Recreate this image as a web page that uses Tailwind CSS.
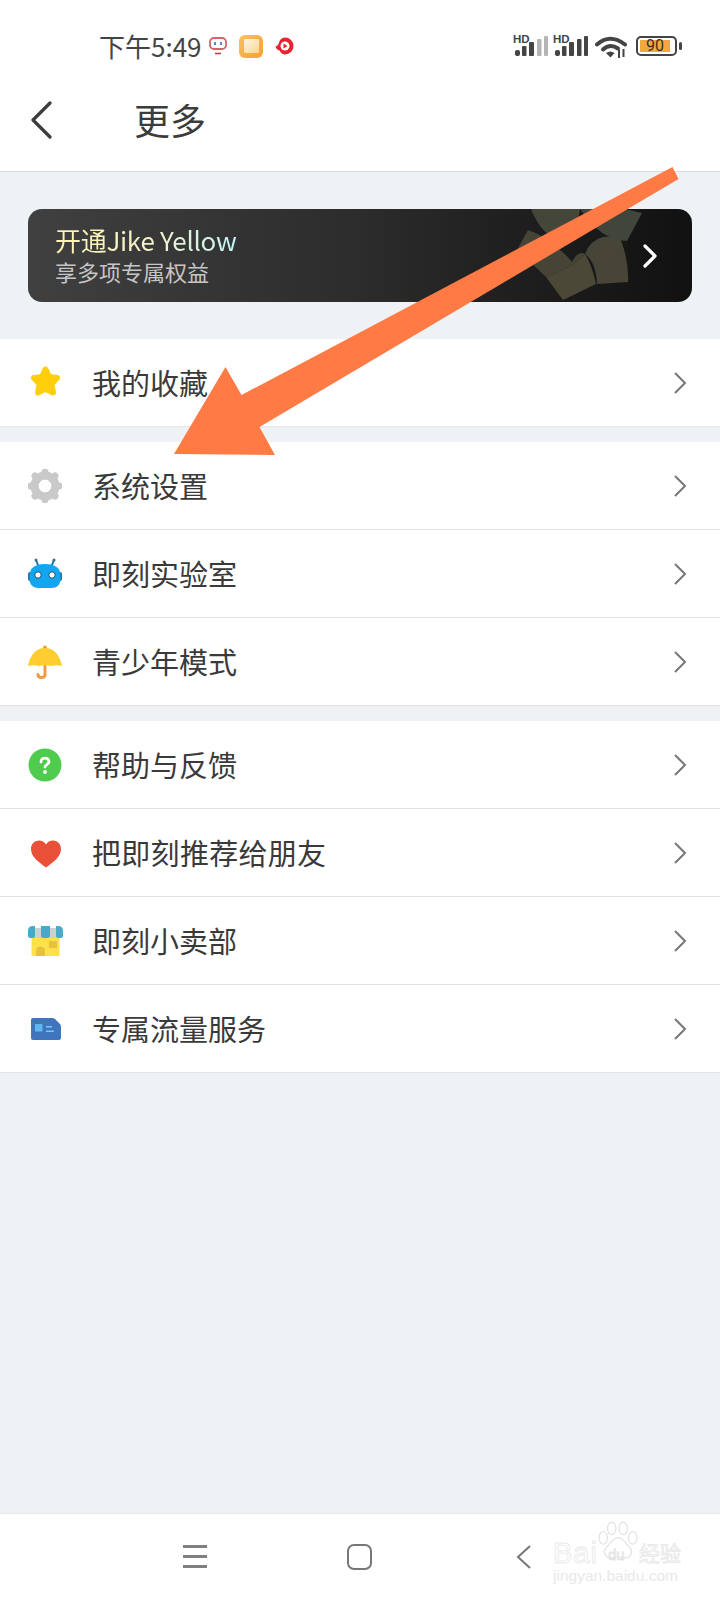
<!DOCTYPE html>
<html lang="zh">
<head>
    <meta charset="UTF-8">
    <meta name="viewport" content="width=device-width, initial-scale=1.0">
    <script src="https://cdn.jsdelivr.net/npm/@tailwindcss/browser@4"></script>
    <title>更多</title>
</head>
<body class="w-[720px] h-[1600px] overflow-hidden bg-[#eef2f5] text-[#3a3a3a] font-['Noto_Sans_CJK_SC','Noto_Sans',sans-serif]">
<div class="relative w-[720px] h-[1600px] flex flex-col">

    <!-- status bar + title -->
    <div class="h-[172px] bg-white border-b border-[#d9dcdf] shrink-0">
        <div class="h-[92px] flex items-center pl-[99px] pr-[42px]">
            <span class="text-[26px] leading-none text-[#444] w-[110px] whitespace-nowrap">下午5:49</span>
            <svg class="w-[18px] h-[18px]" viewBox="0 0 18 18" fill="none">
                <rect x="1" y="1" width="16" height="11" rx="4" stroke="#d9606c" stroke-width="1.800"/>
                <path d="M6 5v3M12 5v3" stroke="#4f78c4" stroke-width="1.800"/>
                <path d="M6 16.500h6" stroke="#e2323c" stroke-width="1.600"/>
            </svg>
            <div class="ml-[12px] w-[24px] h-[23px] rounded-[6px] bg-gradient-to-br from-[#fcc25c] to-[#f59f35] flex items-center justify-center">
                <div class="w-[15px] h-[14px] bg-gradient-to-br from-[#fff6e2] to-[#fbd590] rounded-[1px]"></div>
            </div>
            <svg class="ml-[12px] w-[19px] h-[19px]" viewBox="0 0 19 19">
                <path d="M10 0.500a8.500 8.500 0 0 1 0 17q-3 0-4.500-2.500l-1-1.500q-3-.5-4-4 2-.5 3-2.500 1.500-6.500 6.500-6.500z" fill="#e8222f"/>
                <circle cx="10" cy="9" r="4.500" fill="#fff"/>
                <path d="M8.500 6.500l4 2.500-4 2.500z" fill="#e8222f"/>
            </svg>

            <div class="ml-auto flex items-center">
                <div class="relative w-[35px] h-[22px]">
                    <span class="absolute left-0 top-0 text-[11.5px] font-bold leading-[9px] text-[#444] font-['Liberation_Sans',sans-serif]">HD</span>
                    <svg class="absolute left-0 top-0" width="35" height="22" viewBox="0 0 35 22">
                        <rect x="2" y="15" width="5" height="6" rx="2" fill="#444"/>
                        <rect x="9" y="11" width="4.500" height="10" rx="1" fill="#444"/>
                        <rect x="16" y="7" width="5" height="14" rx="1" fill="#444"/>
                        <rect x="24" y="4" width="4.500" height="17" rx="1" fill="#b5b5b5"/>
                        <rect x="31" y="1" width="4" height="20" rx="1" fill="#b5b5b5"/>
                    </svg>
                </div>
                <div class="relative w-[35px] h-[22px] ml-[5px]">
                    <span class="absolute left-0 top-0 text-[11.5px] font-bold leading-[9px] text-[#444] font-['Liberation_Sans',sans-serif]">HD</span>
                    <svg class="absolute left-0 top-0" width="35" height="22" viewBox="0 0 35 22">
                        <rect x="2" y="15" width="5" height="6" rx="2" fill="#444"/>
                        <rect x="9" y="11" width="4.500" height="10" rx="1" fill="#444"/>
                        <rect x="16" y="7" width="5" height="14" rx="1" fill="#444"/>
                        <rect x="24" y="4" width="4.500" height="17" rx="1" fill="#444"/>
                        <rect x="31" y="1" width="4" height="20" rx="1" fill="#444"/>
                    </svg>
                </div>
                <svg class="ml-[7px]" width="32" height="23" viewBox="0 0 32 23" fill="none">
                    <path d="M2 9.500Q15-2 30 9.500" stroke="#444" stroke-width="4" stroke-linecap="round"/>
                    <path d="M8 14.500Q15 8 23 13.500" stroke="#444" stroke-width="4" stroke-linecap="round"/>
                    <path d="M11 18l4.500 4.500 4-4.500q-4-3-8.500 0z" fill="#444"/>
                    <path d="M24 15v8M28.500 14v8" stroke="#444" stroke-width="2"/>
                </svg>
                <div class="ml-[9px] mr-[1px] relative w-[41px] h-[20px] rounded-[5px] border-2 border-[#444] p-[2px]">
                    <div class="w-[30px] h-full bg-[#f2a93b] flex items-center justify-center font-['Roboto',sans-serif] text-[16px] leading-none text-[#3a3020]">90</div>
                    <div class="absolute -right-[7px] top-[4px] w-[3px] h-[8px] rounded-[2px] bg-[#444]"></div>
                </div>
            </div>
        </div>
        <div class="h-[54px] flex items-center pl-[30px]">
            <svg class="mt-[2px]" width="22" height="38" viewBox="0 0 22 38" fill="none">
                <path d="M20 2 3 19 20 36" stroke="#3c3c3c" stroke-width="3.200" stroke-linecap="round" stroke-linejoin="round"/>
            </svg>
            <h1 class="ml-[82px] text-[36px] leading-none font-normal text-[#3c3c3c]">更多</h1>
        </div>
    </div>

    <!-- jike yellow card -->
    <div class="pt-[37px] px-[28px] shrink-0">
        <div class="relative h-[93px] rounded-[14px] overflow-hidden bg-gradient-to-r from-[#404040] via-[#2c2c2c] to-[#111] pl-[27px] pb-[2px] flex flex-col justify-center">
            <svg class="absolute left-[489px] top-0" width="130" height="93" viewBox="517 209 130 93">
                <path d="M531 209H580Q578 228 568 242Q543 240 531 209z" fill="#45463a"/>
                <path d="M580 209H625L642 213 627 241Q600 240 580 209z" fill="#42453c"/>
                <path d="M585 254Q590 240 603 237 613 235 621 240 629 262 628 282L597 284Q596 262 585 254z" fill="#474537"/>
                <path d="M517 250 528 230Q552 238 572 262 578 250 585 254 572 268 546 277 530 262 517 250z" fill="#454437"/>
                <path d="M546 277 563 300 596 284Q592 265 585 254 572 268 546 277z" fill="#4b4838"/>
            </svg>
            <div class="relative text-[26px] leading-[32px] tracking-[-0.3px] w-fit bg-gradient-to-r from-[#fdf3b4] via-[#f5f3c9] to-[#c2f3f5] bg-clip-text text-transparent">开通Jike Yellow</div>
            <div class="relative text-[22px] leading-[30px] text-[#c6c6c6]">享多项专属权益</div>
            <svg class="absolute left-[615px] top-[35px]" width="14" height="24" viewBox="0 0 14 24" fill="none">
                <path d="M2 2 12 12 2 22" stroke="#fff" stroke-width="3.200" stroke-linecap="round" stroke-linejoin="round"/>
            </svg>
        </div>
    </div>

    <!-- list -->
    <div class="pt-[37px] flex flex-col gap-[15px] shrink-0">
        <div class="bg-white border-b border-[#e4e6e8]">
            <div class="h-[87px] flex items-center pl-[28px] pr-[33px]">
                <svg class="w-[35px] h-[35px]" viewBox="0 0 35 35">
                    <path d="M17.500 4.500 21 12 29 13 23.300 19 25 27.500 17.500 23.500 10 27.500 11.700 19 6 13 14 12z" fill="#fecf0a" stroke="#fecf0a" stroke-width="6" stroke-linejoin="round"/>
                </svg>
                <span class="ml-[29px] text-[29px] leading-none">我的收藏</span>
                <svg class="ml-auto" width="14" height="22" viewBox="0 0 14 22" fill="none"><path d="M2 1 12 11 2 21" stroke="#777" stroke-width="2"/></svg>
            </div>
        </div>

        <div class="bg-white flex flex-col">
            <div class="h-[88px] flex items-center pl-[28px] pr-[33px] border-b border-[#e1e3e5]">
                <svg class="w-[34px] h-[34px]" viewBox="0 0 34 34" fill="none">
                    <circle cx="17" cy="17" r="10.500" stroke="#c9c9c9" stroke-width="8"/>
                    <path d="M17 3v4M17 27v4M3 17h4M27 17h4M7 7l3 3M24 24l3 3M7 27 10 24M24 10l3-3" stroke="#c9c9c9" stroke-width="7" stroke-linecap="round"/>
                </svg>
                <span class="ml-[30px] text-[29px] leading-none">系统设置</span>
                <svg class="ml-auto" width="14" height="22" viewBox="0 0 14 22" fill="none"><path d="M2 1 12 11 2 21" stroke="#777" stroke-width="2"/></svg>
            </div>
            <div class="h-[88px] flex items-center pl-[28px] pr-[33px] border-b border-[#e1e3e5]">
                <svg class="w-[34px] h-[34px]" viewBox="0 0 34 34" fill="none">
                    <path d="M8 3l2 5M26 3l-2 5" stroke="#2c6f95" stroke-width="2" stroke-linecap="round"/>
                    <circle cx="8" cy="3" r="1.500" fill="#2c6f95"/>
                    <circle cx="26" cy="3" r="1.500" fill="#2c6f95"/>
                    <rect x="0" y="15" width="4" height="9" rx="2" fill="#2c6f95"/>
                    <rect x="30" y="15" width="4" height="9" rx="2" fill="#2c6f95"/>
                    <path d="M1.500 19C1.500 10 8 7 17 7s15.500 3 15.500 12v3c0 6-4 9-9 9H10.500c-5 0-9-3-9-9z" fill="#11a6ef"/>
                    <circle cx="10" cy="18" r="3.200" fill="#fff" stroke="#1d4e6b" stroke-width="1"/>
                    <circle cx="24" cy="18" r="3.200" fill="#fff" stroke="#1d4e6b" stroke-width="1"/>
                </svg>
                <span class="ml-[30px] text-[29px] leading-none">即刻实验室</span>
                <svg class="ml-auto" width="14" height="22" viewBox="0 0 14 22" fill="none"><path d="M2 1 12 11 2 21" stroke="#777" stroke-width="2"/></svg>
            </div>
            <div class="h-[88px] flex items-center pl-[28px] pr-[33px] border-b border-[#e1e3e5]">
                <svg class="w-[34px] h-[34px]" viewBox="0 0 34 34" fill="none">
                    <path d="M17 20v9.500q0 3-3.500 3T10 29.500" stroke="#ef9a45" stroke-width="3" stroke-linecap="round"/>
                    <circle cx="17" cy="2.500" r="2" fill="#ef9a45"/>
                    <path d="M17 3C27 3 32 11 34 21 30 20 27 20 23 21 19 20 15 20 11 21 7 20 4 20 0 21 2 11 7 3 17 3z" fill="#fecd2e"/>
                </svg>
                <span class="ml-[30px] text-[29px] leading-none">青少年模式</span>
                <svg class="ml-auto" width="14" height="22" viewBox="0 0 14 22" fill="none"><path d="M2 1 12 11 2 21" stroke="#777" stroke-width="2"/></svg>
            </div>
        </div>

        <div class="bg-white flex flex-col">
            <div class="h-[88px] flex items-center pl-[28px] pr-[33px] border-b border-[#e1e3e5]">
                <svg class="w-[34px] h-[34px]" viewBox="0 0 34 34" fill="none">
                    <circle cx="17" cy="17" r="16.500" fill="#4fcb4e"/>
                    <path d="M13 14c0-2.500 1.800-3.800 4-3.800s4 1.300 4 3.300c0 3-4 3-4 5.500" stroke="#fff" stroke-width="2.800" stroke-linecap="round"/>
                    <circle cx="17" cy="24" r="1.900" fill="#fff"/>
                </svg>
                <span class="ml-[30px] text-[29px] leading-none">帮助与反馈</span>
                <svg class="ml-auto" width="14" height="22" viewBox="0 0 14 22" fill="none"><path d="M2 1 12 11 2 21" stroke="#777" stroke-width="2"/></svg>
            </div>
            <div class="h-[88px] flex items-center pl-[28px] pr-[33px] border-b border-[#e1e3e5]">
                <svg class="w-[34px] h-[34px]" viewBox="0 0 34 34"><path d="M18 31.500C9 25 3 20 3 13 3 8 6.500 4.500 11 4.500c3 0 5.500 1.500 7 4 1.500-2.500 4-4 7-4 4.500 0 8 3.500 8 8.500 0 7-6 12-15 18.500z" fill="#ea5038"/></svg>
                <span class="ml-[30px] text-[29px] leading-none tracking-[0.3px]">把即刻推荐给朋友</span>
                <svg class="ml-auto" width="14" height="22" viewBox="0 0 14 22" fill="none"><path d="M2 1 12 11 2 21" stroke="#777" stroke-width="2"/></svg>
            </div>
            <div class="h-[88px] flex items-center pl-[28px] pr-[33px] border-b border-[#e1e3e5]">
                <svg class="w-[35px] h-[30px] -mr-[1px]" viewBox="0 0 35 30">
                    <rect x="3.500" y="10" width="28" height="20" fill="#fde04a"/>
                    <rect x="3" y="2" width="29" height="10" fill="#cfcfcf"/>
                    <path d="M8 30v-5a4.500 4.500 0 0 1 9 0v5z" fill="#e8c13a"/>
                    <rect x="21" y="15" width="8" height="7" rx="1" fill="#e8c13a"/>
                    <path d="M5 0H7V10a3.500 2 0 0 1-7 0V5Q0 0 5 0zM13 0h9V10a4.500 2 0 0 1-9 0zM28 0h2q5 0 5 5v5a3.500 2 0 0 1-7 0z" fill="#4aa9c8"/>
                </svg>
                <span class="ml-[30px] text-[29px] leading-none">即刻小卖部</span>
                <svg class="ml-auto" width="14" height="22" viewBox="0 0 14 22" fill="none"><path d="M2 1 12 11 2 21" stroke="#777" stroke-width="2"/></svg>
            </div>
            <div class="h-[88px] flex items-center pl-[28px] pr-[33px] border-b border-[#e1e3e5]">
                <svg class="w-[34px] h-[34px]" viewBox="0 0 34 34">
                    <path d="M5 6H24Q26 6 27 7L32 12Q33 13 33 15V26Q33 28 31 28H5Q3 28 3 26V8Q3 6 5 6z" fill="#3e75bd"/>
                    <rect x="7" y="12" width="7.500" height="7.500" fill="#5db8ef"/>
                    <path d="M18 14h6v1.500h-6zM18 18.500h8v1.500h-8z" fill="#7fc4ee"/>
                </svg>
                <span class="ml-[30px] text-[29px] leading-none">专属流量服务</span>
                <svg class="ml-auto" width="14" height="22" viewBox="0 0 14 22" fill="none"><path d="M2 1 12 11 2 21" stroke="#777" stroke-width="2"/></svg>
            </div>
        </div>
    </div>

    <div class="flex-1"></div>

    <!-- nav bar -->
    <div class="h-[87px] bg-white border-t border-[#e6e8ea] shrink-0 flex items-center pl-[183px] pb-[1px]">
        <div class="w-[24px] flex flex-col gap-[7.500px]">
            <div class="h-[2.500px] bg-[#808080]"></div>
            <div class="h-[2.500px] bg-[#808080]"></div>
            <div class="h-[2.500px] bg-[#808080]"></div>
        </div>
        <div class="ml-[140px] w-[25px] h-[26px] rounded-[7px] border-[2.500px] border-[#777]"></div>
        <svg class="ml-[144px]" width="15" height="24" viewBox="0 0 15 24" fill="none"><path d="M14 1 2 12 14 23" stroke="#777" stroke-width="2"/></svg>
    </div>

    <!-- baidu watermark -->
    <div class="absolute left-[553px] top-[1521px] w-[130px] h-[66px] text-transparent">
        <svg class="absolute left-[44px] top-0" width="42" height="40" viewBox="0 0 38 38" fill="#fff" stroke="#e2e2e2" stroke-width="1.100">
            <ellipse cx="13" cy="7" rx="4" ry="6"/>
            <ellipse cx="24" cy="7" rx="4" ry="6"/>
            <ellipse cx="5" cy="16" rx="4" ry="6"/>
            <ellipse cx="33" cy="16" rx="4" ry="6"/>
            <path d="M19 16c6 0 7 6 11 9 4 4 1 10-4 10-3 0-5-1-7-1s-4 1-7 1c-5 0-8-6-4-10 4-3 5-9 11-9z"/>
        </svg>
        <span class="absolute left-0 top-[18px] text-[29px] tracking-[1px] leading-none font-['Liberation_Sans',sans-serif] [-webkit-text-stroke:0.800px_#e8e8e8]">Bai</span>
        <span class="absolute left-[55px] top-[26px] text-[15px] leading-none font-['Liberation_Sans',sans-serif] [-webkit-text-stroke:0.800px_#e2e2e2]">du</span>
        <span class="absolute left-[86px] top-[21px] text-[21px] leading-none [-webkit-text-stroke:0.800px_#e6e6e6]">经验</span>
        <span class="absolute left-0 top-[47px] text-[15.500px] leading-none font-['Liberation_Sans',sans-serif] text-[#e9e9e9]">jingyan.baidu.com</span>
    </div>

    <!-- annotation arrow -->
    <svg class="absolute left-0 top-0 pointer-events-none" width="720" height="1600" viewBox="0 0 720 1600">
        <path d="M672.500 167 678.500 179 259.500 427 275 455 174 454 225.500 367 241.500 395z" fill="#ff7a45"/>
    </svg>
</div>
</body>
</html>
